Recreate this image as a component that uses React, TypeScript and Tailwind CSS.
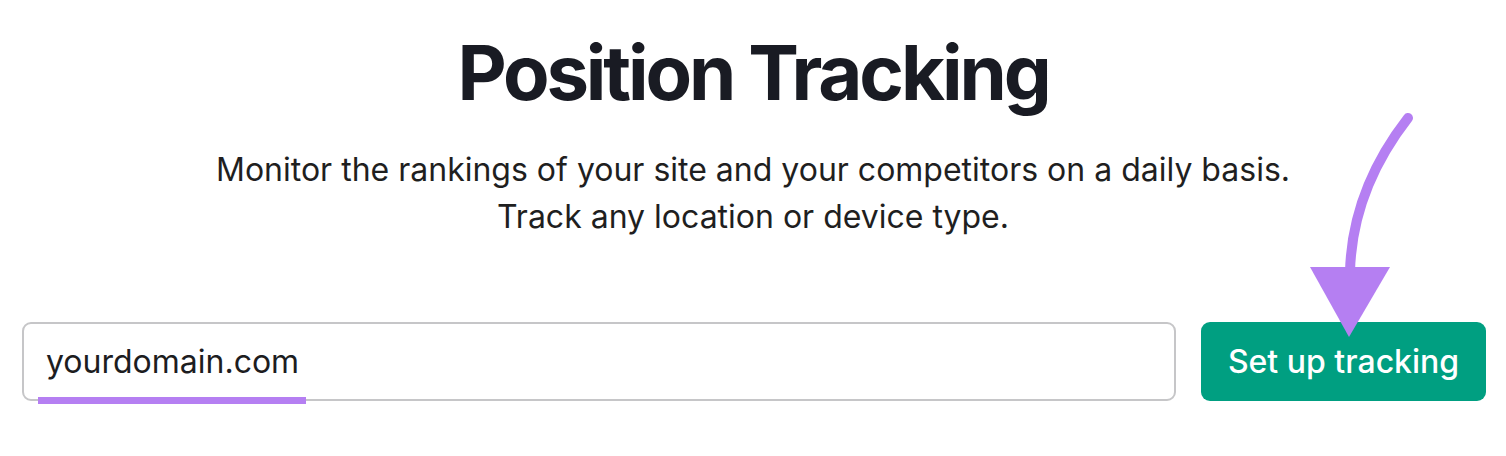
export default function App() {
  return (
    <div className="relative w-[1506px] h-[456px] bg-white overflow-hidden" style={{ fontFamily: "Inter, 'Noto Sans', sans-serif" }}>
      <div className="flex flex-col items-center pt-[34px]">
        <h1 className="text-[76px] leading-none font-bold text-[#191b23] tracking-[-3.1px]">Position Tracking</h1>
        <p className="mt-[36px] text-[32px] leading-[47px] text-[#1f1f1f] text-center">
          Monitor the rankings of your site and your competitors on a daily basis.
          <br />
          Track any location or device type.
        </p>
      </div>

      <div className="flex items-stretch gap-[25px] pl-[22px] pr-[20px] mt-[82px]">
        <div className="relative flex-1 h-[79px] border-2 border-[#c6c6c8] rounded-[9px] flex items-center pl-[22px]">
          <span className="text-[32px] text-[#1d1d1f]">yourdomain.com</span>
          {/* highlight under the domain */}
          <div className="absolute left-[14px] bottom-[-5px] w-[268px] h-[7px] bg-[#b57ff2]" />
        </div>
        <button className="w-[285px] h-[79px] rounded-[9px] bg-[#009f81] text-white text-[32px] font-medium">
          Set up tracking
        </button>
      </div>

      {/* arrow pointing at the button */}
      <svg className="absolute inset-0 pointer-events-none" width="1506" height="456" viewBox="0 0 1506 456">
        <path d="M1408 118 Q1352 190 1350 272" fill="none" stroke="#b57ff2" strokeWidth="10" strokeLinecap="round" />
        <polygon points="1310,267 1390,267 1349,337" fill="#b57ff2" />
      </svg>
    </div>
  );
}
